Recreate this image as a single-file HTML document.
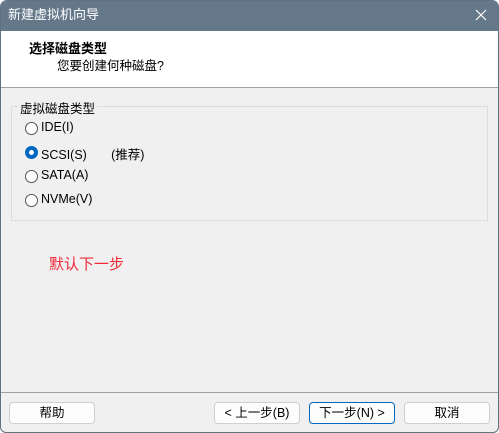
<!DOCTYPE html>
<html><head><meta charset="utf-8"><style>
*{margin:0;padding:0;box-sizing:border-box}
body{width:499px;height:433px;overflow:hidden;background:#fff;font-family:"Liberation Sans","Noto Sans CJK SC",sans-serif;font-size:12px;color:#000}
.win{position:absolute;left:0;top:0;width:499px;height:433px;background:#f0f0f0;border:1px solid #5f7282;border-radius:7px 7px 6px 6px;overflow:hidden}
.title{position:absolute;left:-1px;top:-1px;width:499px;height:31px;background:#64788a;color:#fff;font-size:13px;line-height:30px;padding-left:8px}
.x{position:absolute;right:12px;top:9px}
.hdr{position:absolute;left:-1px;top:30px;width:499px;height:57px;background:#fff;border-bottom:1px solid #a0a0a0}
.h1{position:absolute;left:29px;top:7px;font-weight:bold;font-size:13px}
.h2{position:absolute;left:57px;top:24px;font-size:12.5px}
.grp{position:absolute;left:10px;top:105px;width:477px;height:115px;border:1px solid #dcdcdc}
.lg{position:absolute;left:17px;top:97px;background:#f0f0f0;padding:0 2px;font-size:12.5px}
.r{position:absolute;left:24px;width:13px;height:13px;border:1px solid #555;border-radius:50%;background:#fff}
.r.on{border:none;background:#0067c0}
.r.on::after{content:"";position:absolute;left:4px;top:4px;width:5px;height:5px;border-radius:50%;background:#fff}
.t{position:absolute;left:40px;font-size:12.5px}
.red{position:absolute;left:48px;top:252px;color:#f02a3a;font-size:15px}
.sep{position:absolute;left:-1px;top:391px;width:499px;height:1px;background:#a0a0a0}
.b{position:absolute;top:401px;height:22px;width:86px;background:#fdfdfd;border:1px solid #cfcfcf;border-radius:4px;text-align:center;line-height:20px;font-size:12.5px}
.b.d{border:1px solid #0067c0}
</style></head><body><div class="win">
<div class="title">新建虚拟机向导<svg class="x" width="12" height="12"><path d="M1 1L11 11M11 1L1 11" stroke="#fff" stroke-width="1.2"/></svg></div>
<div class="hdr"><div class="h1">选择磁盘类型</div><div class="h2">您要创建何种磁盘?</div></div>
<div class="grp"></div><div class="lg">虚拟磁盘类型</div>
<div class="r" style="top:121px"></div><div class="t" style="top:119px">IDE(I)</div>
<div class="r on" style="top:145px"></div><div class="t" style="top:143px">SCSI(S)&nbsp;&nbsp;&nbsp;&nbsp;&nbsp;&nbsp;&nbsp;(推荐)</div>
<div class="r" style="top:169px"></div><div class="t" style="top:167px">SATA(A)</div>
<div class="r" style="top:193px"></div><div class="t" style="top:191px">NVMe(V)</div>
<div class="red">默认下一步</div>
<div class="sep"></div>
<div class="b" style="left:8px">帮助</div>
<div class="b" style="left:213px">&lt; 上一步(B)</div>
<div class="b d" style="left:308px">下一步(N) &gt;</div>
<div class="b" style="left:403px">取消</div>
</div></body></html>
